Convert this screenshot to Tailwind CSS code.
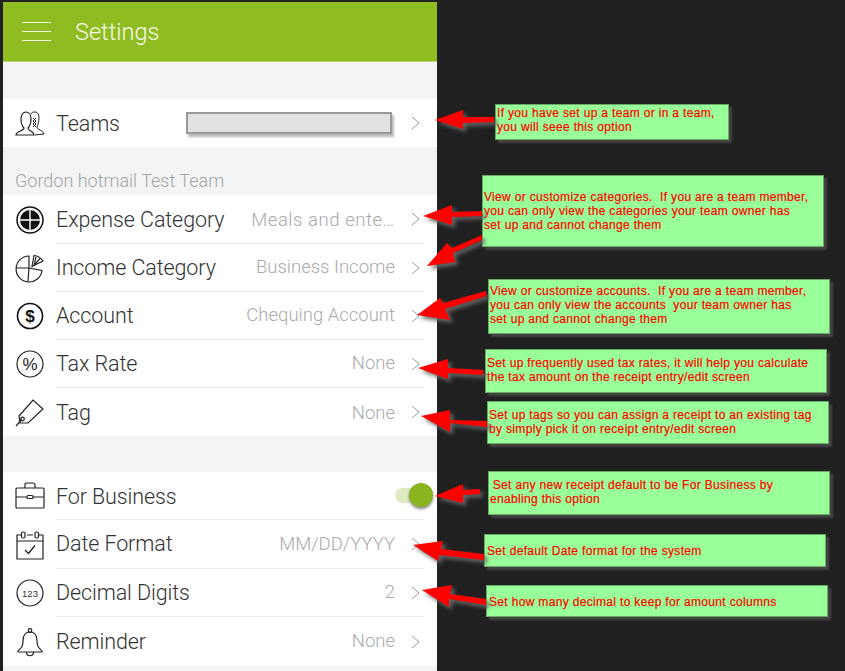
<!DOCTYPE html>
<html lang="en">
<head>
<meta charset="UTF-8">
<title>Settings</title>
<script src="https://cdn.jsdelivr.net/npm/@tailwindcss/browser@4"></script>
</head>
<body class="relative w-[845px] h-[671px] overflow-hidden bg-[#202020] font-['Roboto',sans-serif]">

<!-- phone panel -->
<div class="ml-[3px] w-[434px] h-[671px] pt-[2px]">
  <div class="h-[60px] bg-[#8fbc21] flex items-center pl-[19px] border-b border-[#b9d46f]">
    <div class="w-[29px] flex flex-col gap-[8px]">
      <div class="h-px bg-white/90"></div><div class="h-px bg-white/90"></div><div class="h-px bg-white/90"></div>
    </div>
    <span class="ml-[24px] pt-[3px] text-[23.5px] font-light text-white/90">Settings</span>
  </div>
  <div class="h-[609px] bg-[#f3f4f6]">
    <div class="h-[37px]"></div>

    <!-- Teams -->
    <div class="h-[48px] bg-white flex items-center relative">
      <div class="w-[53px] pl-[12px] text-[#222]">
        <svg class="w-[30px] h-[30px]" viewBox="0 0 30 30" fill="none" stroke="currentColor" stroke-width="1.2"><path d="M1 27c0-4 8-4 8-7-2-2-3-5-3-9 0-4 2-7 5-7s5 3 5 7c0 4-1 7-3 9 0 3 6 3 6 7z"/><path d="M16 6c1-2 2-2 4-2 3 0 4 3 4 6s-1 7-2 9c0 3 6 3 7 7l-9 1M18 10l3 3-3 3 3 3M21 10l-3 3 3 3-3 3" stroke-width="1"/></svg>
      </div>
      <span class="pt-[3px] text-[21.5px] tracking-[-0.1px] font-light text-[#333]">Teams</span>
      <div class="absolute left-[183px] top-[13px] w-[206px] h-[22px] bg-[#e2e2e2] border-2 border-[#999] shadow-[2px_3px_2px_#bbb]"></div>
      <svg class="absolute left-[408px] top-[17px] w-[10px] h-[14px]" viewBox="0 0 10 14" fill="none" stroke="#999"><path d="M1 1l7 6-7 6"/></svg>
    </div>

    <div class="h-[48px] flex items-end pl-[12px] pb-[1px] text-[18px] font-light text-[#a4a4a4]">Gordon hotmail Test Team</div>

    <!-- Team settings -->
    <div class="bg-white">
      <div class="h-[49px] flex items-center">
        <div class="w-[53px] shrink-0 pl-[12px]">
          <svg class="w-[30px] h-[30px]" viewBox="0 0 30 30"><circle cx="15" cy="15" r="13" fill="none" stroke="#111" stroke-width="1.5"/><circle cx="15" cy="15" r="10" fill="#111"/><path d="M15 4v22M4 15h22" stroke="#fff" stroke-width="1.4"/></svg>
        </div>
        <div class="flex-1 h-full flex items-center border-b border-[#eeeeee] mr-[12px] pr-[4px]">
          <span class="pt-[3px] text-[21.5px] tracking-[-0.1px] font-light text-[#333]">Expense Category</span>
          <span class="ml-auto pt-[3px] text-[18.5px] tracking-[0.55px] font-light text-[#aaa]">Meals and ente…</span>
          <svg class="ml-[16px] w-[10px] h-[14px]" viewBox="0 0 10 14" fill="none" stroke="#999"><path d="M1 1l7 6-7 6"/></svg>
        </div>
      </div>
      <div class="h-[48px] flex items-center">
        <div class="w-[53px] shrink-0 pl-[12px]">
          <svg class="w-[30px] h-[30px]" viewBox="0 0 30 30" fill="none" stroke="#222" stroke-width="1.2"><path d="M14 3a13 13 0 1 0 13 14.500L14 15z"/><path d="M1 15h13M14 15l-1 13"/><path d="M17 13.500L19 2.500a12 12 0 0 1 9 5.500z"/><path d="M21 4l-2 9M25 5.500l-6 7"/></svg>
        </div>
        <div class="flex-1 h-full flex items-center border-b border-[#eeeeee] mr-[12px] pr-[4px]">
          <span class="pt-[1px] text-[21.5px] tracking-[-0.1px] font-light text-[#333]">Income Category</span>
          <span class="ml-auto pt-[1px] text-[18.5px] font-light text-[#aaa]">Business Income</span>
          <svg class="ml-[16px] w-[10px] h-[14px]" viewBox="0 0 10 14" fill="none" stroke="#999"><path d="M1 1l7 6-7 6"/></svg>
        </div>
      </div>
      <div class="h-[48px] flex items-center">
        <div class="w-[53px] shrink-0 pl-[12px]">
          <svg class="w-[30px] h-[30px]" viewBox="0 0 30 30"><circle cx="15" cy="15" r="12.500" fill="none" stroke="#111" stroke-width="1.600"/><text x="15" y="21" text-anchor="middle" font-family="Liberation Sans" font-weight="700" font-size="17" fill="#111">$</text></svg>
        </div>
        <div class="flex-1 h-full flex items-center border-b border-[#eeeeee] mr-[12px] pr-[4px]">
          <span class="pt-[1px] text-[21.5px] tracking-[-0.1px] font-light text-[#333]">Account</span>
          <span class="ml-auto pt-[1px] text-[18.5px] font-light text-[#aaa]">Chequing Account</span>
          <svg class="ml-[16px] w-[10px] h-[14px]" viewBox="0 0 10 14" fill="none" stroke="#999"><path d="M1 1l7 6-7 6"/></svg>
        </div>
      </div>
      <div class="h-[48px] flex items-center">
        <div class="w-[53px] shrink-0 pl-[12px]">
          <svg class="w-[30px] h-[30px]" viewBox="0 0 30 30"><circle cx="15" cy="15" r="13" fill="none" stroke="#222" stroke-width="1.2"/><text x="15" y="21" text-anchor="middle" font-family="Liberation Sans" font-size="17" fill="#222">%</text></svg>
        </div>
        <div class="flex-1 h-full flex items-center border-b border-[#eeeeee] mr-[12px] pr-[4px]">
          <span class="pt-[1px] text-[21.5px] tracking-[-0.1px] font-light text-[#333]">Tax Rate</span>
          <span class="ml-auto pt-[1px] text-[18.5px] font-light text-[#aaa]">None</span>
          <svg class="ml-[16px] w-[10px] h-[14px]" viewBox="0 0 10 14" fill="none" stroke="#999"><path d="M1 1l7 6-7 6"/></svg>
        </div>
      </div>
      <div class="h-[48px] flex items-center">
        <div class="w-[53px] shrink-0 pl-[12px]">
          <svg class="w-[30px] h-[30px]" viewBox="0 0 30 30" fill="none" stroke="#222" stroke-width="1.2"><path d="M4 19L18 3l10 9-15 14H5z"/><circle cx="7.500" cy="22" r="1.800"/><path d="M1 29l6-7"/></svg>
        </div>
        <div class="flex-1 h-full flex items-center mr-[12px] pr-[4px]">
          <span class="pt-[3px] text-[21.5px] tracking-[-0.1px] font-light text-[#333]">Tag</span>
          <span class="ml-auto pt-[3px] text-[18.5px] font-light text-[#aaa]">None</span>
          <svg class="ml-[16px] w-[10px] h-[14px]" viewBox="0 0 10 14" fill="none" stroke="#999"><path d="M1 1l7 6-7 6"/></svg>
        </div>
      </div>
    </div>

    <div class="h-[36px]"></div>

    <!-- General settings -->
    <div class="bg-white">
      <div class="h-[48px] flex items-center">
        <div class="w-[53px] shrink-0 pl-[12px]">
          <svg class="w-[30px] h-[30px]" viewBox="0 0 30 30" fill="none" stroke="#222" stroke-width="1.2"><rect x="1" y="7" width="28" height="20" rx="1"/><path d="M1 16h11M18 16h11M10 7V4c0-2 1-2 2-2h6c1 0 2 0 2 2v3"/><rect x="12" y="14.500" width="6" height="3" rx="1"/></svg>
        </div>
        <div class="flex-1 h-full flex items-center border-b border-[#eeeeee] mr-[12px]">
          <span class="pt-[3px] text-[21.5px] tracking-[-0.1px] font-light text-[#333]">For Business</span>
          <div class="relative ml-auto w-[30px] h-[15px] rounded-full bg-[#dfeac4]">
            <div class="absolute right-[-8px] top-[-5px] w-[24px] h-[24px] rounded-full bg-[#8ab51f] shadow-[0_2px_3px_#888]"></div>
          </div>
        </div>
      </div>
      <div class="h-[49px] flex items-center">
        <div class="w-[53px] shrink-0 pl-[12px]">
          <svg class="w-[30px] h-[30px]" viewBox="0 0 30 30" fill="none" stroke="#222" stroke-width="1.2"><path d="M6 5H2v24h26V5h-4M12 5h6M2 11h26"/><rect x="6.500" y="2" width="3.500" height="6" rx="1.500"/><rect x="20" y="2" width="3.500" height="6" rx="1.500"/><path d="M10 20l3.500 3.500L20 15.500" stroke-width="1.400"/></svg>
        </div>
        <div class="flex-1 h-full flex items-center border-b border-[#eeeeee] mr-[12px] pr-[4px]">
          <span class="pt-[1px] text-[21.5px] tracking-[-0.1px] font-light text-[#333]">Date Format</span>
          <span class="ml-auto pt-[1px] text-[18.5px] font-light text-[#aaa]">MM/DD/YYYY</span>
          <svg class="ml-[16px] w-[10px] h-[14px]" viewBox="0 0 10 14" fill="none" stroke="#999"><path d="M1 1l7 6-7 6"/></svg>
        </div>
      </div>
      <div class="h-[48px] flex items-center">
        <div class="w-[53px] shrink-0 pl-[12px]">
          <svg class="w-[30px] h-[30px]" viewBox="0 0 30 30"><circle cx="15" cy="15" r="13" fill="none" stroke="#222" stroke-width="1.2"/><text x="15" y="18.500" text-anchor="middle" font-family="Liberation Sans" font-size="9.500" fill="#333">123</text></svg>
        </div>
        <div class="flex-1 h-full flex items-center border-b border-[#eeeeee] mr-[12px] pr-[4px]">
          <span class="pt-[1px] text-[21.5px] tracking-[-0.1px] font-light text-[#333]">Decimal Digits</span>
          <span class="ml-auto pt-[1px] text-[18.5px] font-light text-[#aaa]">2</span>
          <svg class="ml-[16px] w-[10px] h-[14px]" viewBox="0 0 10 14" fill="none" stroke="#999"><path d="M1 1l7 6-7 6"/></svg>
        </div>
      </div>
      <div class="h-[49px] flex items-center">
        <div class="w-[53px] shrink-0 pl-[12px]">
          <svg class="w-[30px] h-[30px]" viewBox="0 0 30 30" fill="none" stroke="#222" stroke-width="1.2"><path d="M15 5c-5 0-7 4-7 9 0 6-2 7-5 10v1h24v-1c-3-3-5-4-5-10 0-5-2-9-7-9z"/><circle cx="15" cy="3.500" r="1.800"/><path d="M11.500 25c0 5 7 5 7 0"/></svg>
        </div>
        <div class="flex-1 h-full flex items-center mr-[12px] pr-[4px]">
          <span class="pt-[1px] text-[21.5px] tracking-[-0.1px] font-light text-[#333]">Reminder</span>
          <span class="ml-auto pt-[1px] text-[18.5px] font-light text-[#aaa]">None</span>
          <svg class="ml-[16px] w-[10px] h-[14px]" viewBox="0 0 10 14" fill="none" stroke="#999"><path d="M1 1l7 6-7 6"/></svg>
        </div>
      </div>
    </div>
  </div>
</div>

<!-- annotation callouts, placed freely over the screenshot -->
<div class="font-['Liberation_Sans',sans-serif] text-[12px] leading-[14px] tracking-[0.33px] text-[#ff0000] [-webkit-text-stroke:0.2px_#ff0000]">
  <div class="absolute left-[495px] top-[104px] w-[234px] h-[36px] bg-[#99ff99] border border-[#66aa66] shadow-[3px_3px_2px_#444] pl-[1px] pt-[1px]">If you have set up a team or in a team,<br>you will seee this option</div>
  <div class="absolute left-[482px] top-[175px] w-[342px] h-[72px] bg-[#99ff99] border border-[#66aa66] shadow-[3px_3px_2px_#444] pl-[1px] pt-[14px]">View or customize categories.&nbsp; If you are a team member,<br>you can only view the categories your team owner has<br>set up and cannot change them</div>
  <div class="absolute left-[488px] top-[279px] w-[342px] h-[55px] bg-[#99ff99] border border-[#66aa66] shadow-[3px_3px_2px_#444] pl-[1px] pt-[4px]">View or customize accounts.&nbsp; If you are a team member,<br>you can only view the accounts&nbsp; your team owner has<br>set up and cannot change them</div>
  <div class="absolute left-[485px] top-[349px] w-[342px] h-[44px] bg-[#99ff99] border border-[#66aa66] shadow-[3px_3px_2px_#444] pl-[1px] pt-[6px]">Set up frequently used tax rates, it will help you calculate<br>the tax amount on the receipt entry/edit screen</div>
  <div class="absolute left-[487px] top-[401px] w-[342px] h-[43px] bg-[#99ff99] border border-[#66aa66] shadow-[3px_3px_2px_#444] pl-[1px] pt-[6px]">Set up tags so you can assign a receipt to an existing tag<br>by simply pick it on receipt entry/edit screen</div>
  <div class="absolute left-[488px] top-[471px] w-[342px] h-[44px] bg-[#99ff99] border border-[#66aa66] shadow-[3px_3px_2px_#444] pl-[1px] pt-[6px]">&thinsp;Set any new receipt default to be For Business by<br>enabling this option</div>
  <div class="absolute left-[484px] top-[534px] w-[342px] h-[33px] bg-[#99ff99] border border-[#66aa66] shadow-[3px_3px_2px_#444] pl-[2px] pt-[9px]">Set default Date format for the system</div>
  <div class="absolute left-[486px] top-[585px] w-[342px] h-[32px] bg-[#99ff99] border border-[#66aa66] shadow-[3px_3px_2px_#444] pl-[2px] pt-[9px]">Set how many decimal to keep for amount columns</div>
</div>

<!-- red arrows pointing at the rows -->
<svg class="absolute left-0 top-0 w-[845px] h-[671px] drop-shadow-[3px_3px_2px_#666]" viewBox="0 0 845 671" fill="#ff0000">
  <path d="M435 120l28-10v7h31v5l-31 1v6z"/>
  <path d="M423 216l29-11v7l30-1v5l-30 1v8z"/>
  <path d="M427 266l20-23 5 5 30-13v5l-29 13 2 9z"/>
  <path d="M417 315l23-17 3 5 43-12v5l-41 13 5 11z"/>
  <path d="M418 368l30-9v9l35 2v5l-35-2v6z"/>
  <path d="M421 416l29-6v10l37 1v6l-37-4v9z"/>
  <path d="M435 496l28-12v6l17-1v5l-17 1v8z"/>
  <path d="M413 545l30-4-2 8 43 5v6l-45-5-1 6z"/>
  <path d="M422 590l30-5-2 9 36 5v6l-37-6v8z"/>
</svg>

</body>
</html>
